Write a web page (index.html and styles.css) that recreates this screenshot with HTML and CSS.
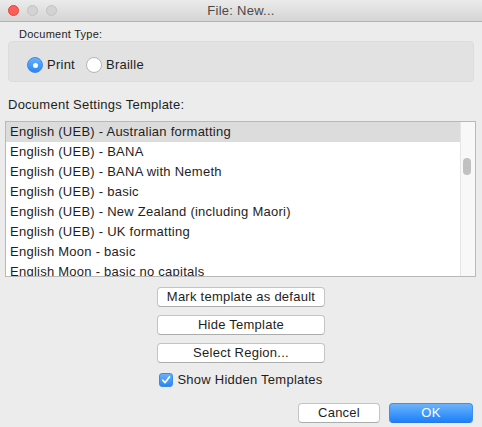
FILE: index.html
```html
<!DOCTYPE html>
<html>
<head>
<meta charset="utf-8">
<link rel="stylesheet" href="styles.css">
</head>
<body>
<div class="window">
  <div class="titlebar">
    <div class="lights">
      <span class="light red"></span>
      <span class="light grey"></span>
      <span class="light grey"></span>
    </div>
    <div class="title">File: New...</div>
  </div>
  <div class="group-label">Document Type:</div>
  <div class="group">
    <label class="radio-item"><span class="radio on"></span>Print</label>
    <label class="radio-item"><span class="radio"></span>Braille</label>
  </div>
  <div class="section-label">Document Settings Template:</div>
  <div class="list">
    <div class="rows">
      <div class="row selected">English (UEB) - Australian formatting</div>
      <div class="row">English (UEB) - BANA</div>
      <div class="row">English (UEB) - BANA with Nemeth</div>
      <div class="row">English (UEB) - basic</div>
      <div class="row">English (UEB) - New Zealand (including Maori)</div>
      <div class="row">English (UEB) - UK formatting</div>
      <div class="row">English Moon - basic</div>
      <div class="row">English Moon - basic no capitals</div>
    </div>
    <div class="scrollbar"><div class="thumb"></div></div>
  </div>
  <div class="actions">
    <button class="btn wide">Mark template as default</button>
    <button class="btn wide">Hide Template</button>
    <button class="btn wide">Select Region...</button>
    <label class="check-item">
      <span class="checkbox"><svg width="10" height="10" viewBox="0 0 10 10"><path d="M1.8 5.2 L4 7.6 L8.4 2" fill="none" stroke="#fff" stroke-width="1.7" stroke-linecap="round" stroke-linejoin="round"/></svg></span>
      Show Hidden Templates
    </label>
  </div>
  <div class="footer">
    <button class="btn cancel">Cancel</button>
    <button class="btn ok">OK</button>
  </div>
</div>
</body>
</html>
```

FILE: styles.css
```css
html, body {
  margin: 0;
  padding: 0;
  background: #ececec;
}
.window {
  width: 482px;
  height: 427px;
  background: #ececec;
  font-family: "Liberation Sans", Arial, sans-serif;
  font-size: 13px;
  letter-spacing: 0.25px;
  color: #1e1e1e;
  display: flex;
  flex-direction: column;
  overflow: hidden;
}
.titlebar {
  height: 21px;
  border-bottom: 1px solid #b3b3b3;
  background: linear-gradient(#ebebeb, #d5d5d5);
  display: flex;
  align-items: center;
  position: relative;
}
.lights {
  display: flex;
  gap: 8px;
  padding-left: 8px;
  position: relative;
  z-index: 1;
}
.light {
  width: 11px;
  height: 11px;
  border-radius: 50%;
  box-sizing: border-box;
}
.light.red {
  background: #fc5f57;
  border: 1px solid #e0443e;
}
.light.grey {
  background: #d3d3d3;
  border: 1px solid #c2c2c2;
}
.title {
  position: absolute;
  left: 0;
  right: 0;
  text-align: center;
  color: #4a4a4a;
  font-size: 13px;
  line-height: 21px;
}
.group-label {
  font-size: 11px;
  line-height: 13px;
  margin: 6px 0 0 19px;
  height: 13px;
}
.group {
  margin: 0 8px 0 8px;
  height: 41px;
  box-sizing: border-box;
  background: #e2e2e2;
  border: 1px solid #dcdcdc;
  border-radius: 4px;
  display: flex;
  align-items: flex-start;
  padding: 15px 0 0 18px;
  gap: 11px;
}
.radio-item {
  display: flex;
  align-items: center;
  gap: 4px;
  height: 16px;
  line-height: 16px;
}
.radio {
  width: 16px;
  height: 16px;
  border-radius: 50%;
  box-sizing: border-box;
  background: #fff;
  border: 1px solid #b5b5b5;
  display: inline-block;
  position: relative;
}
.radio.on {
  background: linear-gradient(#68b1fa, #2a86f6);
  border: 1px solid #3a8ae8;
}
.radio.on::after {
  content: "";
  position: absolute;
  left: 4.5px;
  top: 4.5px;
  width: 5px;
  height: 5px;
  border-radius: 50%;
  background: #fff;
}
.section-label {
  margin: 15px 0 0 8px;
  line-height: 16px;
  height: 16px;
}
.list {
  margin: 8px 0 0 5px;
  width: 471px;
  height: 156px;
  box-sizing: border-box;
  border: 1px solid #b9b9b9;
  background: #fff;
  display: flex;
  overflow: hidden;
}
.rows {
  flex: 1;
  overflow: hidden;
}
.row {
  height: 20px;
  line-height: 20px;
  padding-left: 4px;
  white-space: nowrap;
}
.row.selected {
  background: #dcdcdc;
}
.scrollbar {
  width: 14px;
  border-left: 1px solid #e6e6e6;
  background: #f8f8f8;
  position: relative;
}
.thumb {
  position: absolute;
  left: 2px;
  top: 36px;
  width: 8px;
  height: 17px;
  border-radius: 4px;
  background: #c1c1c1;
}
.actions {
  display: flex;
  flex-direction: column;
  align-items: center;
  margin-top: 10px;
  gap: 8px;
}
.btn {
  font-family: "Liberation Sans", Arial, sans-serif;
  font-size: 13px;
  letter-spacing: 0.25px;
  color: #1e1e1e;
  background: #fff;
  border: 1px solid #c4c4c4;
  border-bottom-color: #acacac;
  border-radius: 4px;
  height: 20px;
  padding: 0;
  line-height: 18px;
  box-sizing: border-box;
  margin: 0;
}
.btn.wide {
  width: 168px;
}
.check-item {
  display: flex;
  align-items: center;
  gap: 4px;
  height: 16px;
  line-height: 16px;
  margin-top: 1px;
}
.checkbox {
  width: 14px;
  height: 14px;
  border-radius: 3px;
  background: linear-gradient(#68b1fa, #2a86f6);
  border: 1px solid #3a8ae8;
  box-sizing: border-box;
  display: flex;
  align-items: center;
  justify-content: center;
}
.footer {
  display: flex;
  justify-content: flex-end;
  gap: 9px;
  margin-top: 15px;
  padding-right: 9px;
}
.btn.cancel {
  width: 82px;
}
.btn.ok {
  width: 84px;
  color: #fff;
  background: linear-gradient(#6cb3fa, #1b81fb);
  border: 1px solid #3f8ef2;
  border-bottom-color: #2a78e0;
}
```
